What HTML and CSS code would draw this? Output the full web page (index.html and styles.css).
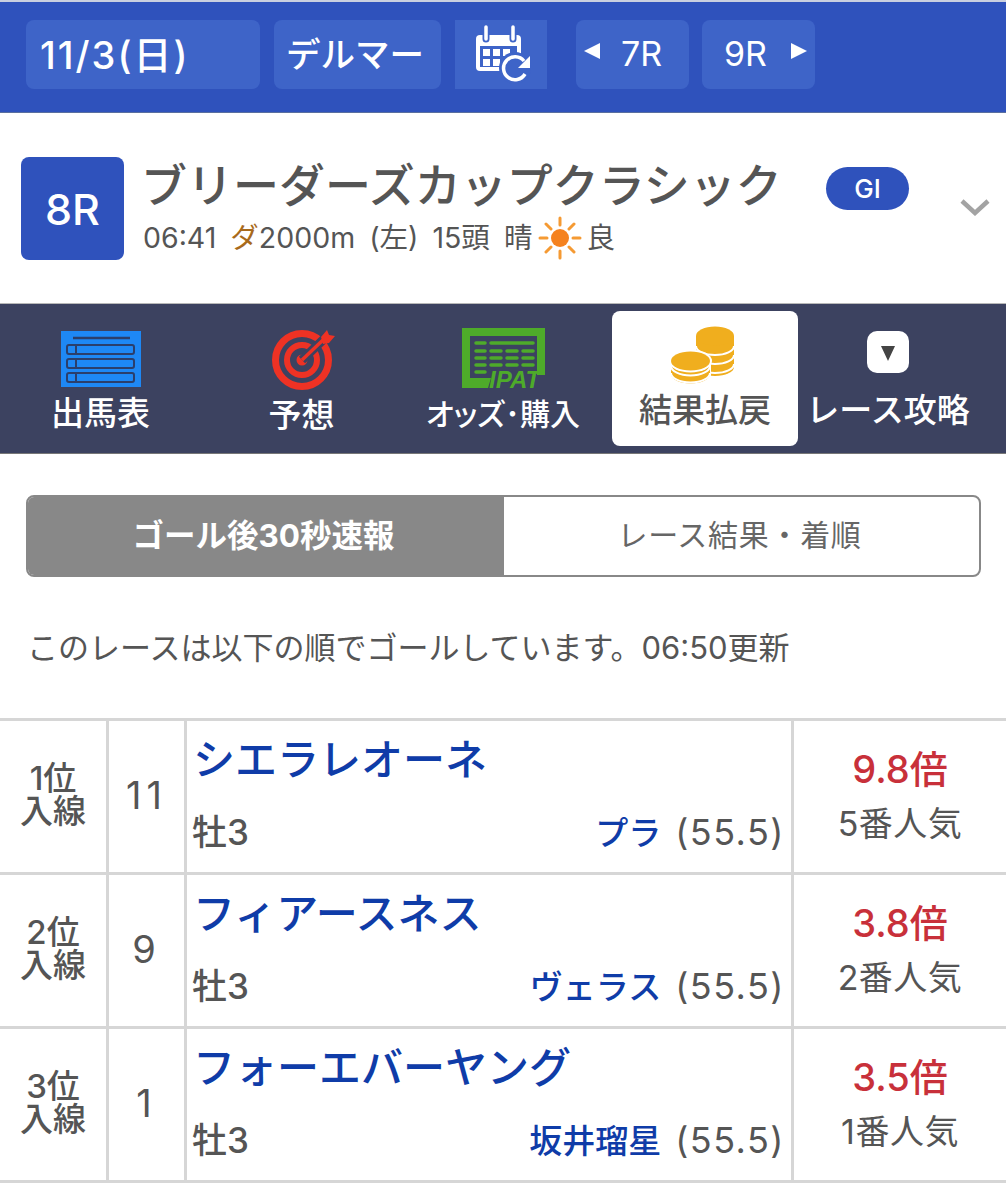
FILE: index.html
```html
<!DOCTYPE html>
<html lang="ja">
<head>
    <meta charset="UTF-8">
    <meta name="viewport" content="width=device-width, initial-scale=1.0">
    <title>レース結果</title>
    <link rel="stylesheet" href="styles.css">
</head>
<body>
    <header class="topbar">
        <div class="top-btn date-btn">11/3(日)</div>
        <div class="top-btn place-btn">デルマー</div>
        <div class="top-btn cal-btn">
            <svg width="60" height="60" viewBox="0 0 60 60">
                <rect x="3" y="10" width="45" height="36" rx="4" fill="#fff"/>
                <rect x="7" y="21" width="37" height="21" fill="#3e64c8"/>
                <rect x="10" y="24" width="7" height="7" fill="#fff"/>
                <rect x="20" y="24" width="7" height="7" fill="#fff"/>
                <rect x="30" y="24" width="7" height="7" fill="#fff"/>
                <rect x="10" y="34" width="7" height="7" fill="#fff"/>
                <rect x="20" y="34" width="7" height="7" fill="#fff"/>
                <path d="M13 2v12M40 2v12" stroke="#3e64c8" stroke-width="7" stroke-linecap="round"/>
                <path d="M13 2v12M40 2v12" stroke="#fff" stroke-width="3.5" stroke-linecap="round"/>
                <circle cx="42" cy="43" r="16" fill="#3e64c8"/>
                <path d="M51 36a11.500 11.500 0 1 0 1 13" fill="none" stroke="#fff" stroke-width="3.500"/>
                <path d="M57 31v12h-12z" fill="#fff"/>
            </svg>
        </div>
        <div class="top-btn race-btn prev-btn"><span class="tri tri-left"></span>7R</div>
        <div class="top-btn race-btn next-btn">9R<span class="tri tri-right"></span></div>
    </header>

    <section class="race-head">
        <div class="race-no">8R</div>
        <div class="race-info">
            <h1>ブリーダーズカップクラシック</h1>
            <p class="race-meta">06:41 <span class="dirt">ダ</span>2000m (左) 15頭 晴<svg class="sun" width="44" height="44" viewBox="0 0 44 44">
                    <circle cx="22" cy="22" r="9" fill="#f5821f"/>
                    <path d="M22 2v7M22 35v7M2 22h7M35 22h7M8 8l5 5M31 31l5 5M8 36l5-5M31 13l5-5" stroke="#f59a33" stroke-width="3" stroke-linecap="round"/>
                </svg>良</p>
        </div>
        <div class="grade">GI</div>
        <svg class="chevron" width="30" height="18" viewBox="0 0 30 18">
            <path d="M2 3l13 12L28 3" fill="none" stroke="#a3a3a3" stroke-width="4.5"/>
        </svg>
    </section>

    <nav class="race-nav">
        <a class="nav-tab tab-card">
            <svg class="nav-icon" width="80" height="56" viewBox="0 0 80 56">
                <rect width="80" height="56" fill="#1e88f5"/>
                <path d="M12 7h57" stroke="#2b3f6c" stroke-width="2.5"/>
                <rect x="6" y="14" width="67" height="9" rx="2" fill="none" stroke="#2b3f6c" stroke-width="2"/>
                <rect x="6" y="28" width="67" height="9" rx="2" fill="none" stroke="#2b3f6c" stroke-width="2"/>
                <rect x="6" y="42" width="67" height="9" rx="2" fill="none" stroke="#2b3f6c" stroke-width="2"/>
                <path d="M15 14v9M15 28v9M15 42v9" stroke="#2b3f6c" stroke-width="2"/>
            </svg>
            <span>出馬表</span>
        </a>
        <a class="nav-tab tab-yoso">
            <svg class="nav-icon" width="66" height="62" viewBox="0 0 66 62">
                <circle cx="31" cy="31" r="26.5" fill="none" stroke="#ee3224" stroke-width="7"/>
                <circle cx="31" cy="31" r="15" fill="none" stroke="#ee3224" stroke-width="6"/>
                <circle cx="31" cy="31" r="5.5" fill="#ee3224"/>
                <path d="M31 31L55 8" stroke="#3c4260" stroke-width="9"/>
                <path d="M31 31L52 11" stroke="#ee3224" stroke-width="3.5"/>
                <path d="M50 8l6-7 2 5 6 1-6 7-6 1z" fill="#ee3224"/>
            </svg>
            <span>予想</span>
        </a>
        <a class="nav-tab tab-odds">
            <svg class="nav-icon" width="86" height="66" viewBox="0 0 86 66">
                <path d="M0 0h83v47h-8V8H8v42h21l-3 10H0z" fill="#4eab2a"/>
                <g stroke="#4eab2a" stroke-width="3.5" stroke-linecap="round">
                    <path d="M14 15h9M29 15h42"/>
                    <path d="M14 23h9M29 23h10M45 23h10M61 23h10"/>
                    <path d="M14 30h9M29 30h10M45 30h10M61 30h10"/>
                    <path d="M14 37h9M29 37h10M45 37h10M61 37h10"/>
                    <path d="M14 44h9"/>
                </g>
                <text class="ipat" x="27" y="60">IPAT</text>
            </svg>
            <span>オッズ･購入</span>
        </a>
        <a class="nav-tab tab-result active">
            <svg class="nav-icon" width="68" height="60" viewBox="0 0 68 60">
                <path d="M27 11v31a19 9 0 0 0 38 0V11z" fill="#f0ae1e"/>
                <path d="M27 21a19 9 0 0 0 38 0M27 30a19 9 0 0 0 38 0M27 39a19 9 0 0 0 38 0" fill="none" stroke="#fff" stroke-width="2"/>
                <ellipse cx="46" cy="11" rx="19" ry="9.5" fill="#f0ae1e"/>
                <path d="M0 37v13a21 10 0 0 0 42 0V37z" fill="#fff"/>
                <path d="M2 37v12a19.500 9.500 0 0 0 39 0V37z" fill="#f0ae1e"/>
                <path d="M2 41a19.500 9.500 0 0 0 39 0M2 48a19.500 9.500 0 0 0 39 0" fill="none" stroke="#fff" stroke-width="2"/>
                <ellipse cx="21.500" cy="36" rx="21.500" ry="11.500" fill="#fff"/>
                <ellipse cx="21.500" cy="36" rx="19.500" ry="9.500" fill="#f0ae1e"/>
            </svg>
            <span>結果払戻</span>
        </a>
        <a class="nav-tab tab-guide">
            <span class="guide-icon"><i></i></span>
            <span>レース攻略</span>
        </a>
    </nav>

    <div class="seg">
        <div class="seg-item on">ゴール後30秒速報</div>
        <div class="seg-item">レース結果・着順</div>
    </div>

    <p class="notice">このレースは以下の順でゴールしています。06:50更新</p>

    <div class="result">
        <div class="row">
            <div class="cell rank">1位<br>入線</div>
            <div class="cell num">11</div>
            <div class="cell horse">
                <a class="name">シエラレオーネ</a>
                <div class="sub"><span>牡3</span><span class="jockey-wrap"><a class="jockey">プラ</a><span class="weight">(55.5)</span></span></div>
            </div>
            <div class="cell odds"><b>9.8倍</b><span>5番人気</span></div>
        </div>
        <div class="row">
            <div class="cell rank">2位<br>入線</div>
            <div class="cell num">9</div>
            <div class="cell horse">
                <a class="name">フィアースネス</a>
                <div class="sub"><span>牡3</span><span class="jockey-wrap"><a class="jockey">ヴェラス</a><span class="weight">(55.5)</span></span></div>
            </div>
            <div class="cell odds"><b>3.8倍</b><span>2番人気</span></div>
        </div>
        <div class="row">
            <div class="cell rank">3位<br>入線</div>
            <div class="cell num">1</div>
            <div class="cell horse">
                <a class="name">フォーエバーヤング</a>
                <div class="sub"><span>牡3</span><span class="jockey-wrap"><a class="jockey">坂井瑠星</a><span class="weight">(55.5)</span></span></div>
            </div>
            <div class="cell odds"><b>3.5倍</b><span>1番人気</span></div>
        </div>
    </div>
</body>
</html>
```

FILE: styles.css
```css
* { margin: 0; padding: 0; box-sizing: border-box; }

body {
    font-family: Inter, "Noto Sans CJK JP", sans-serif;
    background: #fff;
    color: #555;
}

/* top bar */
.topbar {
    display: flex;
    align-items: flex-start;
    height: 113px;
    padding: 18px 0 0 26px;
    background: #2f52bc;
    border-top: 2px solid #c9cfe0;
    border-bottom: 1px solid #5a6f9f;
}

.top-btn {
    display: flex;
    align-items: center;
    height: 69px;
    background: #3e64c8;
    border-radius: 8px;
    color: #fff;
    font-weight: 500;
}

.date-btn {
    width: 234px;
    padding: 0 0 4px 14px;
    font-size: 38px;
    letter-spacing: 2px;
}

.place-btn {
    width: 167px;
    margin-left: 14px;
    padding: 0 0 5px 12px;
    font-size: 34.5px;
}

.cal-btn {
    width: 92px;
    margin-left: 14px;
    padding-left: 4px;
    border-radius: 0;
    justify-content: center;
}

.race-btn {
    width: 113px;
    padding-bottom: 2px;
    font-size: 34px;
    font-weight: 400;
}

.prev-btn { margin-left: 29px; padding-left: 8px; }
.next-btn { margin-left: 13px; padding-left: 22px; }

.tri {
    width: 0;
    height: 0;
    border-top: 8px solid transparent;
    border-bottom: 8px solid transparent;
    margin-top: -6px;
}

.tri-left { border-right: 16px solid #fff; margin-right: 21px; }
.tri-right { border-left: 16px solid #fff; margin-left: 24px; }

/* race title */
.race-head {
    display: flex;
    align-items: flex-start;
    height: 190px;
    padding: 44px 0 0 21px;
}

.race-no {
    display: flex;
    align-items: center;
    justify-content: center;
    width: 103px;
    height: 103px;
    background: #2f52bc;
    border-radius: 8px;
    color: #fff;
    font-size: 43px;
    font-weight: 500;
}

.race-info {
    width: 702px;
    padding-left: 17px;
}

.race-info h1 {
    font-size: 46px;
    line-height: 56px;
    font-weight: 500;
    color: #555;
    white-space: nowrap;
}

.race-meta {
    margin: 3px 0 0 2px;
    font-size: 28.5px;
    line-height: 44px;
    word-spacing: 6px;
    color: #555;
    white-space: nowrap;
}

.sun {
    vertical-align: middle;
    margin: -6px 4px -2px 6px;
}

.dirt { color: #a86a1c; }

.grade {
    width: 83px;
    height: 43px;
    margin-top: 10px;
    background: #2f52bc;
    border-radius: 22px;
    color: #fff;
    font-size: 26px;
    font-weight: 500;
    line-height: 43px;
    text-align: center;
}

.chevron { margin: 41px 0 0 51px; }

/* nav */
.race-nav {
    display: grid;
    grid-template-columns: 201px 201px 210px 186px 1fr;
    height: 151px;
    padding: 7px 0;
    background: #3c4260;
    border-top: 1px solid #b8b8b8;
    border-bottom: 1px solid #777;
}

.nav-tab {
    display: flex;
    flex-direction: column;
    align-items: center;
    border-radius: 8px;
    color: #fff;
    font-size: 33px;
    font-weight: 500;
    line-height: 40px;
    white-space: nowrap;
}

.tab-card .nav-icon { margin-top: 20px; }
.tab-card span { margin-top: 6px; }
.tab-yoso .nav-icon { margin: 18px 0 0 5px; }
.tab-yoso span { margin-top: 4px; }
.tab-odds { padding-right: 8px; font-size: 30px; font-feature-settings: "palt"; }
.tab-odds .nav-icon { margin: 17px 0 0 3px; }
.tab-odds span { margin-top: 0; }
.tab-result .nav-icon { margin: 14px 5px 0 0; }
.tab-result span { margin-top: 5px; }
.tab-guide { padding-right: 28px; }

.active {
    background: #fff;
    color: #555;
}

.guide-icon {
    display: flex;
    align-items: center;
    justify-content: center;
    width: 42px;
    height: 42px;
    margin-top: 20px;
    background: #fff;
    border-radius: 10px;
}

.guide-icon i {
    width: 0;
    height: 0;
    margin-top: 3px;
    border-left: 7px solid transparent;
    border-right: 7px solid transparent;
    border-top: 15px solid #444;
}

.tab-guide span:last-child { margin-top: 17px; }

/* segment */
.seg {
    display: flex;
    width: 955px;
    height: 82px;
    margin: 41px 0 0 26px;
    border: 2px solid #888;
    border-radius: 8px;
    overflow: hidden;
}

.seg-item {
    display: flex;
    flex: 1;
    align-items: center;
    justify-content: center;
    padding: 0 4px 6px 0;
    font-size: 30px;
    letter-spacing: 0.7px;
    color: #666;
}

.seg-item.on {
    flex: 0 0 476px;
    padding-right: 5px;
    background: #888;
    color: #fff;
    font-size: 31.5px;
    font-weight: 700;
    letter-spacing: 0;
}

.notice {
    margin: 49px 0 0 27px;
    font-size: 31px;
    line-height: 44px;
    color: #555;
    white-space: nowrap;
}

/* result table */
.result {
    margin-top: 48px;
    border-top: 3px solid #d6d6d6;
}

.row {
    display: grid;
    grid-template-columns: 109px 78px 607px 1fr;
    height: 154px;
    border-bottom: 3px solid #d6d6d6;
}

.cell {
    border-right: 3px solid #d6d6d6;
}

.rank {
    padding-top: 41px;
    text-align: center;
    font-size: 33px;
    line-height: 33px;
    font-weight: 500;
}

.num {
    padding-top: 51px;
    text-align: center;
    font-size: 38px;
    font-weight: 400;
    line-height: 46px;
    letter-spacing: 5px;
}

.horse {
    padding: 12px 6px 0 5px;
}

.name {
    display: block;
    padding-left: 1px;
    font-size: 42px;
    line-height: 54px;
    font-weight: 500;
    color: #0f3ca8;
    white-space: nowrap;
}

.sub {
    display: flex;
    justify-content: space-between;
    margin-top: 23px;
    font-size: 35px;
    line-height: 44px;
    font-weight: 500;
}

.jockey {
    font-size: 33px;
    color: #0f3ca8;
}

.weight {
    margin-left: 14px;
    font-size: 36px;
    font-weight: 400;
    letter-spacing: 1.5px;
}

.odds {
    display: flex;
    flex-direction: column;
    align-items: center;
    padding-top: 23px;
    border-right: 0;
    font-size: 34px;
}

.odds b {
    font-size: 38px;
    line-height: 50px;
    font-weight: 500;
    color: #c8303a;
}

.odds span {
    margin-top: 8px;
    line-height: 44px;
    letter-spacing: 0.5px;
}

.ipat {
    font-family: "Liberation Sans", sans-serif;
    font-size: 24px;
    font-weight: 700;
    font-style: italic;
    fill: #4eab2a;
}
```
